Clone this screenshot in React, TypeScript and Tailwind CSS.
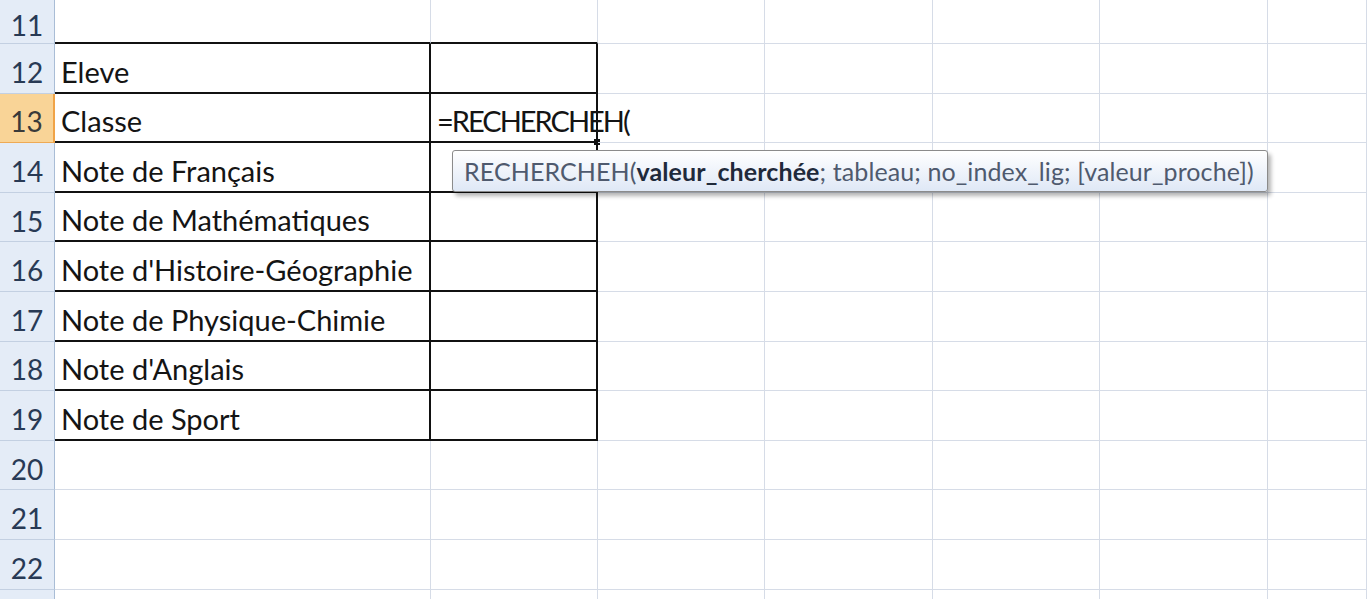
// Excel sheet with RECHERCHEH formula tooltip
const ROWS = [
  { n: 11, a: "", b: "" },
  { n: 12, a: "Eleve", b: "" },
  { n: 13, a: "Classe", b: "=RECHERCHEH(" },
  { n: 14, a: "Note de Français", b: "" },
  { n: 15, a: "Note de Mathématiques", b: "" },
  { n: 16, a: "Note d'Histoire-Géographie", b: "" },
  { n: 17, a: "Note de Physique-Chimie", b: "" },
  { n: 18, a: "Note d'Anglais", b: "" },
  { n: 19, a: "Note de Sport", b: "" },
  { n: 20, a: "", b: "" },
  { n: 21, a: "", b: "" },
  { n: 22, a: "", b: "" },
  { n: 23, a: "", b: "" },
];

const COL_W = ["w-[376px]", "w-[167px]", "w-[167px]", "w-[168px]", "w-[167px]", "w-[168px]", "w-[99px]"];

function Row({ row, first }: { row: (typeof ROWS)[number]; first: boolean }) {
  const active = row.n === 13;
  const inTable = row.n >= 12 && row.n <= 19;
  const above = row.n === 11;
  // last row is only a sliver at the bottom edge, its number is hidden
  const label = row.n === 23 ? "" : row.n;
  return (
    <div className={`flex ${first ? "h-[44px]" : "h-[49.6px]"}`}>
      <div
        className={`flex w-[55px] shrink-0 items-center justify-center pt-[7px] text-[28px] border-b ${
          active
            ? "bg-[#f9d497] border-r-2 border-r-[#f0a347] border-b-[#eeaa55] text-[#3a3a3a]"
            : "bg-[#e4ecf7] border-r border-r-[#a9bdd6] border-b-[#c3d0e2] text-[#283a55]"
        }`}
      >
        {label}
      </div>
      {COL_W.map((w, i) => {
        const tableCol = i < 2;
        const bottom =
          tableCol && (inTable || above) ? "border-b-2 border-b-[#111]" : "border-b border-b-[#d6dce7]";
        const right = tableCol && inTable ? "border-r-2 border-r-[#111]" : "border-r border-r-[#d6dce7]";
        const text = i === 0 ? row.a : i === 1 ? row.b : "";
        return (
          <div
            key={i}
            className={`relative flex shrink-0 items-center overflow-visible whitespace-nowrap pl-[6px] pt-[7px] text-[29px] text-[#141414] ${w} ${bottom} ${right} ${
              i === 1 ? "tracking-[-2px]" : ""
            }`}
          >
            {text}
            {active && i === 1 && (
              <span className="absolute -bottom-[4px] -right-[4px] h-[6px] w-[6px] bg-[#111]" />
            )}
          </div>
        );
      })}
    </div>
  );
}

export default function App() {
  return (
    <div
      className="relative h-[599px] w-[1367px] overflow-hidden bg-white"
      style={{ fontFamily: "Lato, 'Open Sans', sans-serif" }}
    >
      {ROWS.map((r, i) => (
        <Row key={r.n} row={r} first={i === 0} />
      ))}

      <div className="absolute left-[452px] top-[150px] flex h-[42px] w-[816px] items-center rounded-[3px] border border-[#8b8b8b] bg-gradient-to-b from-white to-[#dfe8f6] pl-[11px] pt-[2px] text-[25px] tracking-[0.1px] text-[#4f5a6e] shadow-[3px_4px_4px_rgba(0,0,0,0.3)]">
        RECHERCHEH(<span className="font-bold text-[#1f2a3b]">valeur_cherchée</span>; tableau; no_index_lig;
        [valeur_proche])
      </div>
    </div>
  );
}
